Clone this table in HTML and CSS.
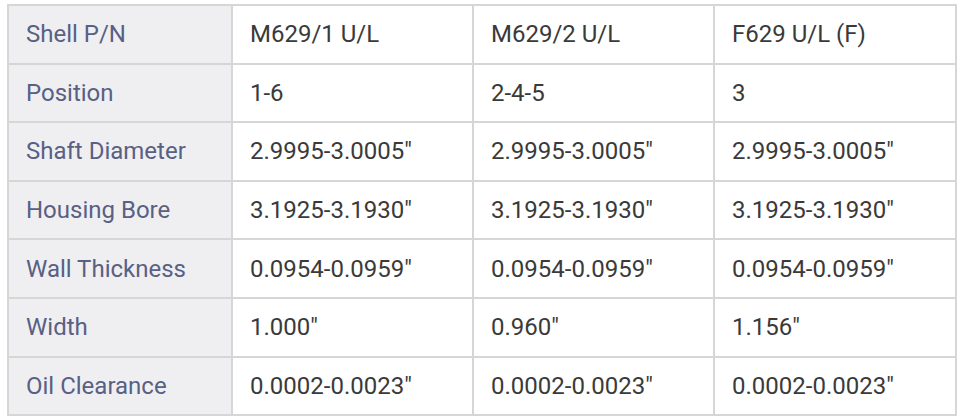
FILE: index.html
```html
<!DOCTYPE html>
<html>
<head>
<meta charset="utf-8">
<link rel="stylesheet" href="styles.css">
</head>
<body>
<table class="spec">
<colgroup><col class="c0"><col class="c1"><col class="c2"><col class="c3"></colgroup>
<tr><th>Shell P/N</th><td>M629/1 U/L</td><td>M629/2 U/L</td><td>F629 U/L (F)</td></tr>
<tr><th>Position</th><td>1-6</td><td>2-4-5</td><td>3</td></tr>
<tr><th>Shaft Diameter</th><td>2.9995-3.0005"</td><td>2.9995-3.0005"</td><td>2.9995-3.0005"</td></tr>
<tr><th>Housing Bore</th><td>3.1925-3.1930"</td><td>3.1925-3.1930"</td><td>3.1925-3.1930"</td></tr>
<tr><th>Wall Thickness</th><td>0.0954-0.0959"</td><td>0.0954-0.0959"</td><td>0.0954-0.0959"</td></tr>
<tr><th>Width</th><td>1.000"</td><td>0.960"</td><td>1.156"</td></tr>
<tr><th>Oil Clearance</th><td>0.0002-0.0023"</td><td>0.0002-0.0023"</td><td>0.0002-0.0023"</td></tr>
</table>
</body>
</html>
```
FILE: styles.css
```css
html, body { margin: 0; padding: 0; background: #fff; }
body { padding: 4px 0 0 7px; font-family: Roboto, "Liberation Sans", sans-serif; }
.spec { border-collapse: collapse; table-layout: fixed; width: 948px; }
.c0 { width: 224px; }
.c1 { width: 241px; }
.c2 { width: 241px; }
.c3 { width: 242px; }
.spec th, .spec td {
  border: 2px solid #d6d6d6;
  height: 56.6px;
  padding: 0 0 0 17px;
  text-align: left;
  vertical-align: middle;
  font-size: 24px;
  font-weight: 400;
}
.spec th { background: #efeff1; color: #586084; }
.spec td { background: #fff; color: #3a3a3a; }
```
